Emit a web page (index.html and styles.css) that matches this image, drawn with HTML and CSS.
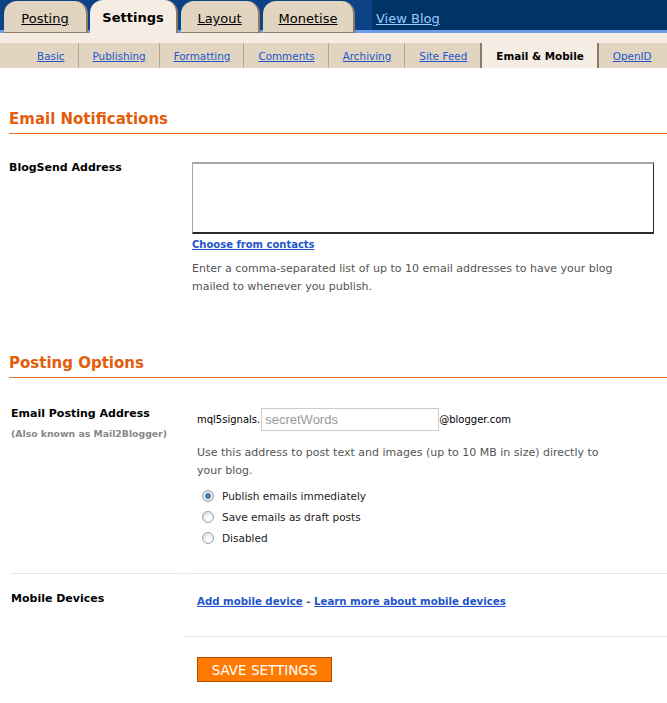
FILE: index.html
```html
<!DOCTYPE html>
<html lang="en">
<head>
  <meta charset="UTF-8">
  <title>Settings | Email &amp; Mobile</title>
  <link rel="stylesheet" href="styles.css">
</head>
<body>
  <div class="topbar">
    <div class="tabs">
      <a class="tab posting" href="#">Posting</a>
      <a class="tab settings active" href="#">Settings</a>
      <a class="tab layout" href="#">Layout</a>
      <a class="tab monetise" href="#">Monetise</a>
    </div>
    <div class="viewblog"><a href="#">View Blog</a></div>
  </div>
  <div class="strip"></div>
  <div class="subtabs">
    <a class="subtab" href="#">Basic</a>
    <a class="subtab" href="#">Publishing</a>
    <a class="subtab" href="#">Formatting</a>
    <a class="subtab" href="#">Comments</a>
    <a class="subtab" href="#">Archiving</a>
    <a class="subtab" href="#">Site Feed</a>
    <span class="subtab current">Email &amp; Mobile</span>
    <a class="subtab" href="#">OpenID</a>
  </div>

  <div class="content">
    <h2>Email Notifications</h2>
    <div class="row notify">
      <div class="label">BlogSend Address</div>
      <div class="field">
        <textarea class="sendlist"></textarea>
        <a class="contacts" href="#">Choose from contacts</a>
        <p class="desc">Enter a comma-separated list of up to 10 email addresses to have your blog<br>mailed to whenever you publish.</p>
      </div>
    </div>

    <h2 class="second">Posting Options</h2>
    <div class="options">
      <div class="cell left">
        <div class="label">Email Posting Address</div>
        <div class="aka">(Also known as Mail2Blogger)</div>
      </div>
      <div class="cell right">
        <div class="address">
          <span>mql5signals.</span><input class="secret" type="text" placeholder="secretWords"><span>@blogger.com</span>
        </div>
        <p class="desc">Use this address to post text and images (up to 10 MB in size) directly to<br>your blog.</p>
        <label class="radio"><span class="dot checked"></span>Publish emails immediately</label>
        <label class="radio"><span class="dot"></span>Save emails as draft posts</label>
        <label class="radio"><span class="dot"></span>Disabled</label>
      </div>

      <div class="cell left lined">
        <div class="label mobile">Mobile Devices</div>
      </div>
      <div class="cell right lined closed">
        <div class="mobilelinks"><a href="#">Add mobile device</a> - <a href="#">Learn more about mobile devices</a></div>
      </div>

      <div class="cell left"></div>
      <div class="cell right">
        <button class="save" type="button">SAVE SETTINGS</button>
      </div>
    </div>
  </div>
</body>
</html>
```

FILE: styles.css
```css
body {
  margin: 0;
  background: #fff;
  font-family: "DejaVu Sans", Verdana, sans-serif;
  font-size: 11px;
  color: #000;
}
a {
  color: #2255cc;
}

/* top navigation */
.topbar {
  display: flex;
  height: 33px;
  background: #0c4286;
  box-shadow: inset 0 -3px 0 #6e9ceb;
}
.tabs {
  display: flex;
  align-items: flex-end;
  gap: 2px;
  padding-left: 4px;
  width: 368px;
}
.tab {
  box-sizing: border-box;
  height: 32px;
  padding-top: 10px;
  background: #e1d5c1;
  border-right: 2px solid #8d7a66;
  border-bottom: 1px solid #8d7a66;
  border-radius: 13px 13px 0 0;
  color: #000;
  font-size: 13px;
  text-align: center;
  white-space: nowrap;
}
.tab.posting { width: 84px; }
.tab.settings { width: 88px; }
.tab.layout { width: 79px; margin-left: 1px; }
.tab.monetise { width: 92px; margin-left: 1px; }
.tab.active {
  height: 33px;
  background: #f5ede3;
  border-bottom: none;
  font-weight: bold;
  text-decoration: none;
}
.viewblog {
  flex: 1;
  background: #003366;
  box-shadow: inset 0 -3px 0 #6e9ceb;
  padding: 11px 0 0 4px;
}
.viewblog a {
  color: #99ccff;
  font-size: 13px;
}
.strip {
  height: 10px;
  background: #f5ede3;
}
.subtabs {
  display: flex;
  height: 25px;
  padding-left: 23px;
  background: #e1d5c1;
  font-size: 10.4px;
  white-space: nowrap;
}
.subtab {
  display: flex;
  align-items: center;
  padding: 0 13px 0 14px;
  border-right: 1px solid #b9a68f;
}
.subtab.current {
  background: #f5ede3;
  border-left: 2px solid #8d7a66;
  border-right: 2px solid #8d7a66;
  margin-left: -1px;
  font-weight: bold;
}
.subtab:last-child {
  border-right: none;
}

/* page body */
.content {
  margin-left: 9px;
}
h2 {
  margin: 41px 0 0;
  padding-bottom: 4px;
  line-height: 20px;
  border-bottom: 1px solid #e6701e;
  color: #e35d0a;
  font-size: 15px;
}
h2.second {
  margin-top: 57px;
}
.label {
  font-size: 11px;
  font-weight: bold;
  line-height: 16px;
}
.desc {
  margin: 0;
  color: #555;
  font-size: 11px;
  line-height: 18px;
}

.row.notify {
  display: grid;
  grid-template-columns: 183px 1fr;
  padding-top: 26px;
}
.sendlist {
  display: block;
  box-sizing: border-box;
  width: 462px;
  height: 72px;
  margin: 2px 0 0;
  border: 2px solid;
  border-color: #a8a8a8 #2b2b2b #2b2b2b #a8a8a8;
  border-width: 2px 1px 2px 1px;
  resize: none;
}
.contacts {
  display: block;
  margin-top: 3px;
  font-size: 10px;
  font-weight: bold;
  line-height: 16px;
}
.notify .desc {
  margin-top: 7px;
}

.options {
  display: grid;
  grid-template-columns: 173px 1fr;
  column-gap: 2px;
  margin-left: 1px;
}
.cell.left {
  padding-left: 1px;
}
.cell.right {
  padding-left: 12px;
}
.options > .cell:nth-child(-n+2) {
  padding-top: 28px;
  padding-bottom: 25px;
}
.aka {
  margin-top: 4px;
  color: #888;
  font-size: 9.3px;
  font-weight: bold;
  line-height: 16px;
}
.address {
  display: flex;
  align-items: center;
  margin-top: 2px;
  height: 23px;
  font-size: 10px;
}
.secret {
  box-sizing: border-box;
  width: 178px;
  height: 23px;
  margin: 0 0 0 1px;
  padding: 0 3px;
  border: 1px solid #ccc;
  font-family: "Liberation Sans", Arial, sans-serif;
  font-size: 13px;
}
.secret::placeholder {
  color: #999;
}
.right .desc {
  margin-top: 13px;
}
.radio {
  display: flex;
  align-items: center;
  gap: 8px;
  height: 21px;
  padding-left: 5px;
  font-size: 10.5px;
  color: #222;
}
.right .desc + .radio {
  margin-top: 5px;
}
.dot {
  box-sizing: border-box;
  width: 12px;
  height: 12px;
  border: 1px solid #9aa3ad;
  border-radius: 50%;
  background: radial-gradient(circle at 60% 65%, #ffffff 20%, #d8d8d8 90%);
}
.dot.checked {
  background: radial-gradient(circle at 50% 50%, #4aa0dc 0, #1e5f94 30%, #cfd6dc 42%, #f2f2f2 80%);
}
.cell.lined {
  border-top: 1px solid #e6e6e6;
}
.label.mobile {
  padding-top: 17px;
}
.cell.right.closed {
  padding-top: 20px;
  padding-bottom: 26px;
  border-bottom: 1px solid #e6e6e6;
}
.mobilelinks {
  font-size: 10.2px;
  font-weight: bold;
  line-height: 16px;
  color: #555;
}
.save {
  margin-top: 20px;
  width: 135px;
  height: 25px;
  padding: 0;
  background: #ff7a00;
  border: 1px solid #b34a00;
  color: #fff;
  font-family: "DejaVu Sans", sans-serif;
  font-size: 13.5px;
}
```
